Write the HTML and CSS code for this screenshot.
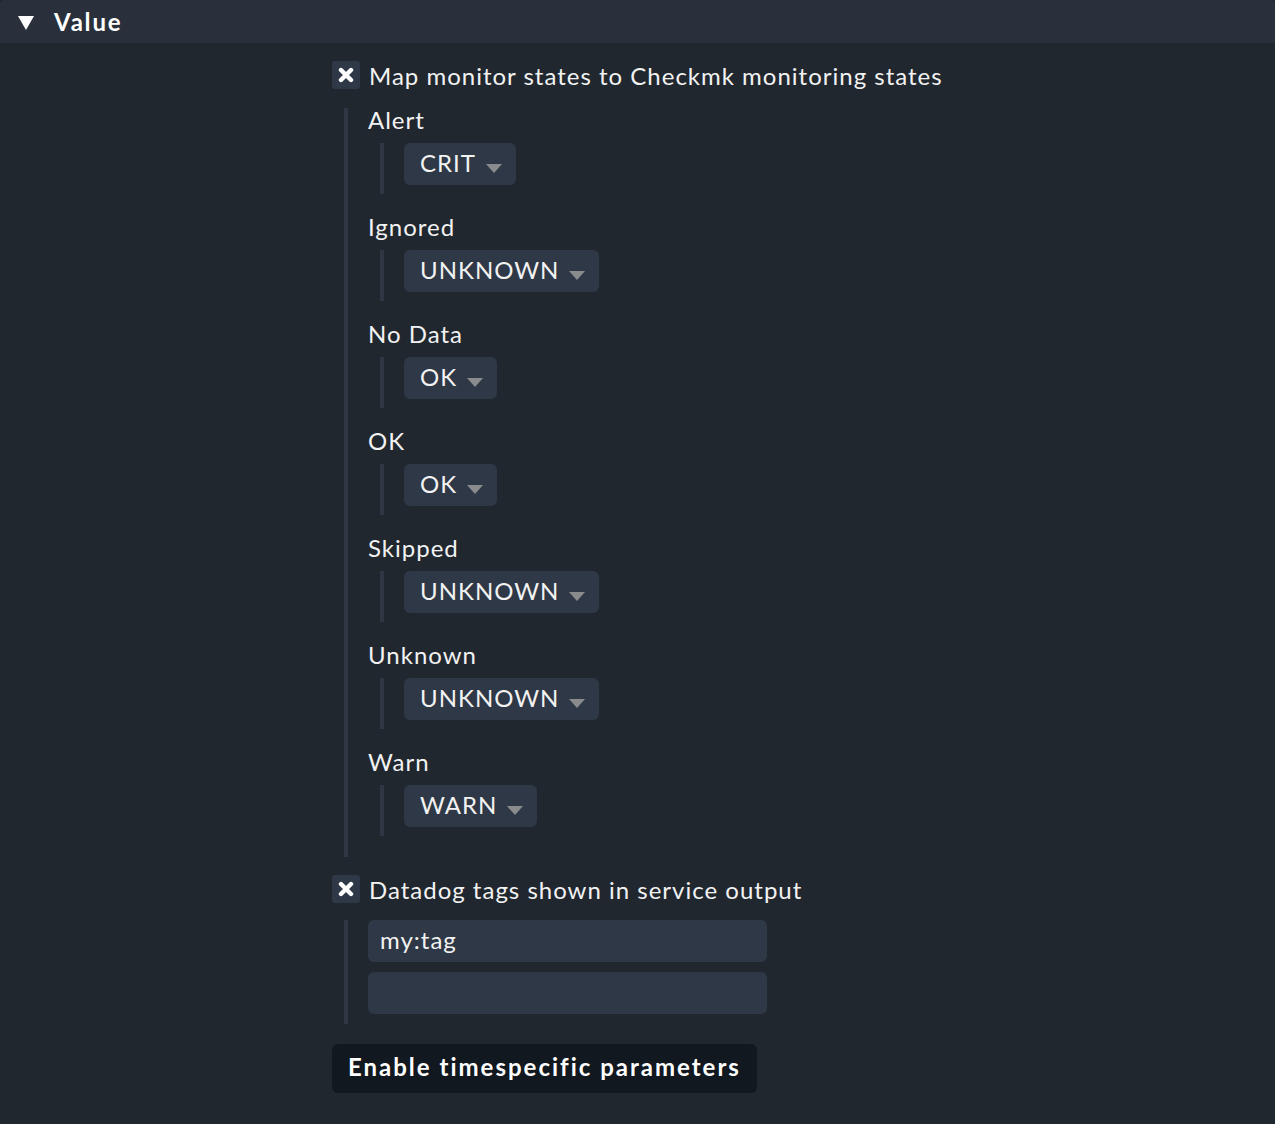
FILE: index.html
```html
<!DOCTYPE html>
<html>
<head>
<meta charset="utf-8">
<link rel="stylesheet" href="styles.css">
</head>
<body>
<div class="panel">
  <div class="header">
    <span class="tri"></span>
    <span class="title">Value</span>
  </div>
  <div class="content">
    <div class="check-row">
      <span class="checkbox"><svg width="16" height="16" viewBox="0 0 16 16"><path d="M3 3 L13 13 M13 3 L3 13" stroke="#fff" stroke-width="4.4" stroke-linecap="round"/></svg></span>
      <span class="check-label">Map monitor states to Checkmk monitoring states</span>
    </div>
    <div class="nest states">
      <div class="item">
        <div class="item-label">Alert</div>
        <div class="inner"><div class="select"><span>CRIT</span><span class="arrow"></span></div></div>
      </div>
      <div class="item">
        <div class="item-label">Ignored</div>
        <div class="inner"><div class="select"><span>UNKNOWN</span><span class="arrow"></span></div></div>
      </div>
      <div class="item">
        <div class="item-label">No Data</div>
        <div class="inner"><div class="select"><span>OK</span><span class="arrow"></span></div></div>
      </div>
      <div class="item">
        <div class="item-label">OK</div>
        <div class="inner"><div class="select"><span>OK</span><span class="arrow"></span></div></div>
      </div>
      <div class="item">
        <div class="item-label">Skipped</div>
        <div class="inner"><div class="select"><span>UNKNOWN</span><span class="arrow"></span></div></div>
      </div>
      <div class="item">
        <div class="item-label">Unknown</div>
        <div class="inner"><div class="select"><span>UNKNOWN</span><span class="arrow"></span></div></div>
      </div>
      <div class="item">
        <div class="item-label">Warn</div>
        <div class="inner"><div class="select"><span>WARN</span><span class="arrow"></span></div></div>
      </div>
    </div>
    <div class="check-row second">
      <span class="checkbox"><svg width="16" height="16" viewBox="0 0 16 16"><path d="M3 3 L13 13 M13 3 L3 13" stroke="#fff" stroke-width="4.4" stroke-linecap="round"/></svg></span>
      <span class="check-label">Datadog tags shown in service output</span>
    </div>
    <div class="nest tags">
      <div class="input">my:tag</div>
      <div class="input"></div>
    </div>
    <div class="button">Enable timespecific parameters</div>
  </div>
</div>
</body>
</html>
```
FILE: styles.css
```css
html, body {
  margin: 0;
  padding: 0;
  background: #21272f;
}
body {
  font-family: Lato, "Open Sans", sans-serif;
  color: #f2f2f2;
  font-size: 24px;
  letter-spacing: 1px;
  width: 1275px;
  height: 1124px;
  overflow: hidden;
}
.panel {
  background: #21272f;
  border-radius: 4px 4px 0 0;
  overflow: hidden;
  height: 1124px;
}
.header {
  height: 43px;
  background: #29303b;
  display: flex;
  align-items: center;
  padding-left: 18px;
}
.tri {
  width: 0;
  height: 0;
  border-left: 8px solid transparent;
  border-right: 8px solid transparent;
  border-top: 14px solid #fff;
  margin-top: 2px;
}
.title {
  margin-left: 20px;
  font-weight: bold;
  letter-spacing: 1.8px;
  color: #fff;
}
.content {
  padding-left: 332px;
}
.check-row {
  display: flex;
  align-items: center;
  margin-top: 18px;
  height: 28px;
}
.check-row.second {
  margin-top: 18px;
}
.checkbox {
  width: 28px;
  height: 28px;
  background: #2f3846;
  border-radius: 3px;
  display: flex;
  align-items: center;
  justify-content: center;
}
.check-label {
  margin-left: 9px;
}
.nest {
  margin-left: 12px;
  border-left: 4px solid #2f3744;
  padding-left: 20px;
}
.states {
  margin-top: 19px;
}
.item {
  padding-bottom: 21px;
}
.item-label {
  height: 26px;
  line-height: 24px;
  margin-bottom: 9px;
}
.inner {
  margin-left: 12px;
  border-left: 4px solid #2f3744;
  padding-left: 20px;
  padding-bottom: 9px;
}
.select {
  display: inline-flex;
  align-items: center;
  height: 42px;
  background: #2f3846;
  border-radius: 6px;
  padding: 0 14px 0 16px;
  box-sizing: border-box;
}
.select span:first-child {
  margin-top: -3px;
}
.arrow {
  width: 0;
  height: 0;
  border-left: 8px solid transparent;
  border-right: 8px solid transparent;
  border-top: 9px solid #8a8b8d;
  margin-left: 10px;
  margin-top: 8px;
}
.tags {
  margin-top: 17px;
  padding-bottom: 10px;
}
.input {
  width: 399px;
  height: 42px;
  box-sizing: border-box;
  background: #2f3846;
  border-radius: 6px;
  padding-left: 12px;
  line-height: 40px;
}
.input + .input {
  margin-top: 10px;
}
.button {
  display: inline-block;
  margin-top: 20px;
  height: 49px;
  line-height: 46px;
  padding: 0 16px;
  background: #121820;
  border-radius: 6px;
  font-weight: bold;
  letter-spacing: 2px;
  color: #fff;
}
```
